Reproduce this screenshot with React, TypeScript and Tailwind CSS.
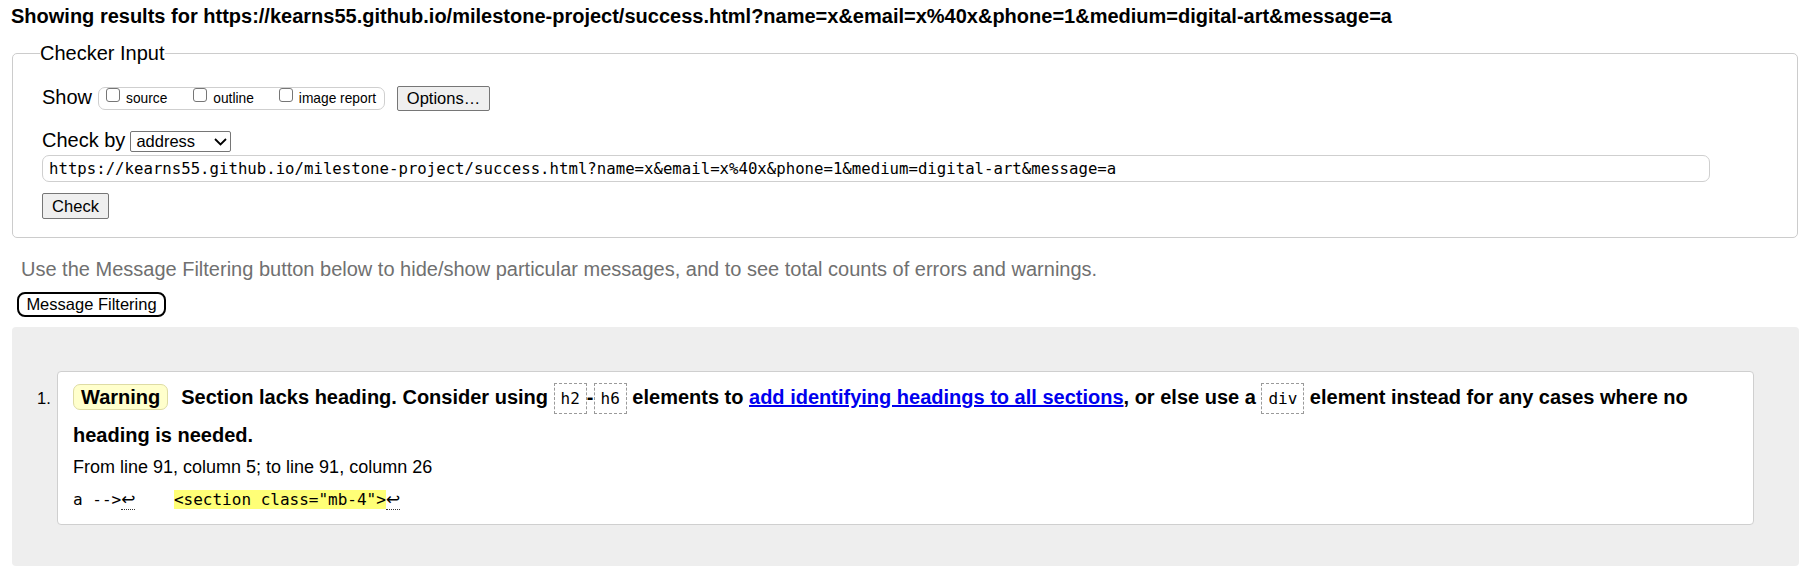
import React from 'react';

const url =
  'https://kearns55.github.io/milestone-project/success.html?name=x&email=x%40x&phone=1&medium=digital-art&message=a';

function Box() {
  return <span className="block w-[14px] h-[14px] shrink-0 rounded-[3px] border border-[#767676] bg-white" />;
}

function Code({ children }: { children: React.ReactNode }) {
  return (
    <span className="font-['DejaVu_Sans_Mono',monospace] font-normal text-[16px] leading-[20px] border border-dashed border-[#9a9a9a] px-[6px] py-[5px]">
      {children}
    </span>
  );
}

function Ret() {
  return (
    <span className="font-['DejaVu_Sans',sans-serif] text-[17px] border-b border-dotted border-[#333]">↩</span>
  );
}

export default function App() {
  return (
    <div className="w-[1801px] h-[579px] overflow-hidden bg-white text-black font-['Liberation_Sans',Arial,sans-serif]">
      <h2 className="pl-[11px] pt-[5px] text-[20px] leading-[22px] font-bold whitespace-nowrap">
        Showing results for {url}
      </h2>

      {/* Checker input */}
      <fieldset className="ml-[12px] mt-[15px] w-[1786px] rounded-[5px] border border-[#cccccc]">
        <legend className="ml-[27px] text-[20px] leading-[22px]">Checker Input</legend>
        <div className="pl-[29px] pr-[87px] pt-[22px] pb-[18px]">
          <div className="flex h-[25px] items-center">
            <span className="mb-[4px] text-[20px] leading-[22px]">Show</span>
            <div className="ml-[6px] flex h-[23px] items-start rounded-[7px] border border-[#cfcfcf] pl-[7px] pr-[8px] text-[13.75px] leading-[16px]">
              <Box />
              <span className="ml-[6px] mt-[3px]">source</span>
              <span className="ml-[26px]"><Box /></span>
              <span className="ml-[6px] mt-[3px]">outline</span>
              <span className="ml-[25px]"><Box /></span>
              <span className="ml-[6px] mt-[3px]">image report</span>
            </div>
            <button className="ml-[12px] h-[25px] w-[93px] rounded-[2px] border border-[#767676] bg-[#efefef] text-[16.5px] leading-[19px]">
              Options…
            </button>
          </div>

          <div className="mt-[18px] flex h-[21px] items-baseline">
            <span className="text-[20px] leading-[22px]">Check by</span>
            <div className="ml-[5px] flex h-[21px] w-[101px] items-center justify-between rounded-[2px] border border-[#767676] pl-[5px] pr-[3px] text-[16.5px] leading-[19px]">
              <span>address</span>
              <svg width="13" height="8" viewBox="0 0 13 8" fill="none">
                <polyline points="1,1 6.5,6.5 12,1" stroke="#000" strokeWidth="1.8" />
              </svg>
            </div>
          </div>

          <div className="mt-[5px] flex h-[27px] w-[1668px] items-center rounded-[7px] border border-[#cfcfcf] pl-[6px] font-['DejaVu_Sans_Mono',monospace] text-[15.7px] whitespace-nowrap">
            {url}
          </div>

          <button className="mt-[11px] block h-[26px] w-[67px] rounded-[2px] border border-[#767676] bg-[#efefef] text-[16.5px] leading-[19px]">
            Check
          </button>
        </div>
      </fieldset>

      <p className="mt-[20px] pl-[21px] text-[20px] leading-[22px] text-[#707070]">
        Use the Message Filtering button below to hide/show particular messages, and to see total counts of errors and warnings.
      </p>

      <button className="ml-[17px] mt-[12px] block h-[25px] w-[149px] rounded-[8px] border-2 border-black bg-white text-[16.5px] leading-[19px]">
        Message Filtering
      </button>

      {/* Results */}
      <div className="ml-[12px] mt-[10px] h-[239px] w-[1787px] rounded-[4px] bg-[#eeeeee] pl-[25px] pt-[44px]">
        <div className="flex items-baseline">
          <span className="w-[20px] shrink-0 text-[16.5px]">1.</span>
          <div className="w-[1697px] rounded-[4px] border border-[#cfcfcf] bg-white pl-[15px] pr-[15px] pt-[6px] pb-[12px]">
            <p className="text-[20px] leading-[38px] font-bold">
              <span className="mr-[13px] inline-block rounded-[7px] border border-[#dedca4] bg-[#ffffcc] px-[7px] leading-[24px]">
                Warning
              </span>
              Section lacks heading. Consider using <Code>h2</Code>-<Code>h6</Code> elements to{' '}
              <a href="#" className="text-[#0000ee] underline">add identifying headings to all sections</a>, or else use a{' '}
              <Code>div</Code> element instead for any cases where no heading is needed.
            </p>
            <p className="mt-[1px] text-[18px] leading-[24px]">From line 91, column 5; to line 91, column 26</p>
            <p className="mt-[8px] font-['DejaVu_Sans_Mono',monospace] text-[16px] leading-[24px] whitespace-pre">
              a --&gt;<Ret />
              {'    '}
              <span className="bg-[#ffff77]">&lt;section class="mb-4"&gt;</span>
              <Ret />
            </p>
          </div>
        </div>
      </div>
    </div>
  );
}
